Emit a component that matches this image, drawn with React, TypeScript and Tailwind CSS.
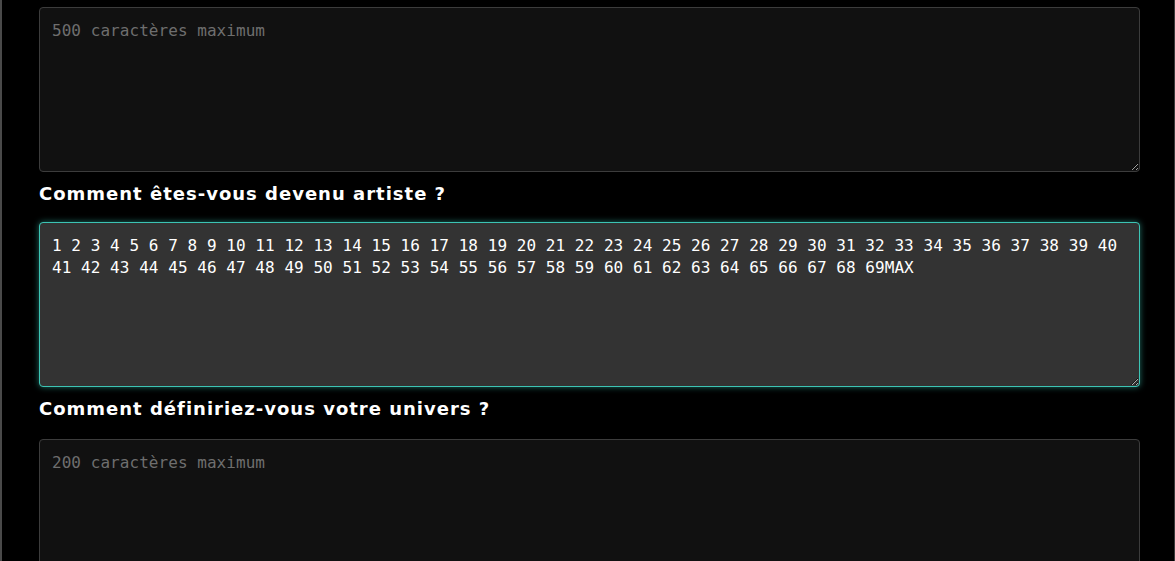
import type { ReactNode } from "react"

const numbers = Array.from({ length: 69 }, (_, i) => String(i + 1)).join(" ") + "MAX"

function Label({ children, last = false }: { children: ReactNode; last?: boolean }) {
  return (
    <p
      className={
        "pt-[9px] font-['DejaVu_Sans',sans-serif] text-[18px] font-bold leading-[26px] tracking-[1px] text-white " +
        (last ? "pb-[17px]" : "pb-[15px]")
      }
    >
      {children}
    </p>
  )
}

type FieldProps = {
  placeholder?: string
  value?: string
  active?: boolean
}

function Field({ placeholder, value, active = false }: FieldProps) {
  return (
    <textarea
      readOnly
      value={value ?? ""}
      placeholder={placeholder}
      className={
        active
          ? "block h-[165px] w-full resize-y rounded-[4px] border border-[#3cc4b4] bg-[#333333] px-3 pt-[12px] pb-[10px] font-['DejaVu_Sans_Mono',monospace] text-[16px] leading-[22px] tracking-[0.05px] text-white shadow-[0_0_6px_rgba(60,196,180,0.55)] outline-none"
          : "block h-[165px] w-full resize-y rounded-[4px] border border-[#3c3c3c] bg-[#111111] px-3 pt-[12px] pb-[10px] font-['DejaVu_Sans_Mono',monospace] text-[16px] leading-[22px] tracking-[0.05px] text-white outline-none placeholder:text-[#6e6e6e]"
      }
    />
  )
}

export default function App() {
  return (
    <div className="h-[561px] overflow-hidden bg-black">
      <div className="h-full border-l-2 border-r border-l-[#4a4a4a] border-r-[#3a3a3a] pl-[37px] pr-[34px] pt-[7px]">
        <Field placeholder="500 caractères maximum" />
        <Label>Comment êtes-vous devenu artiste ?</Label>
        <Field value={numbers} active />
        <Label last>Comment définiriez-vous votre univers ?</Label>
        <Field placeholder="200 caractères maximum" />
      </div>
    </div>
  )
}
